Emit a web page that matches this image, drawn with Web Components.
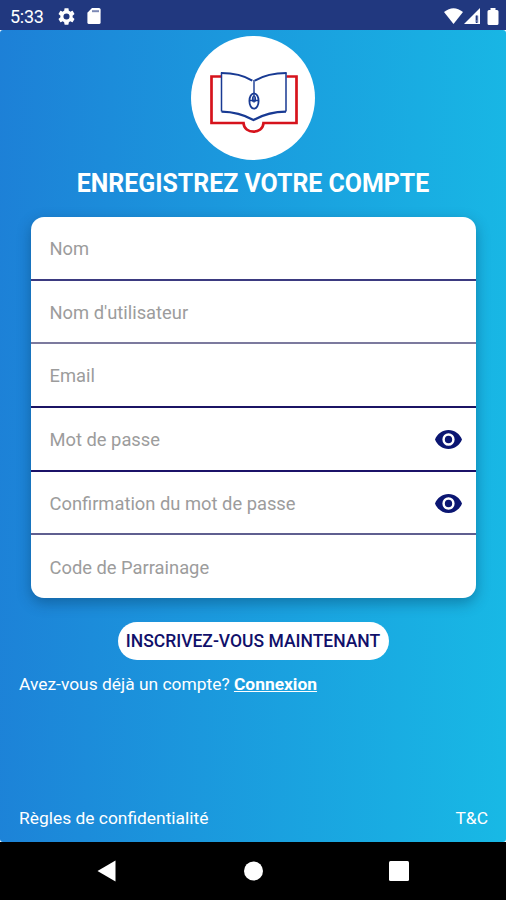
<!DOCTYPE html>
<html lang="fr">
<head>
<meta charset="utf-8">
<title>Enregistrez votre compte</title>
<style>
  html, body {
    margin: 0;
    height: 100%;
    background: #000;
    font-family: Roboto, "Liberation Sans", sans-serif;
  }
</style>
</head>
<body>
<register-screen></register-screen>

<script>
// Builds a custom element from its shadow markup
function define(name, html) {
  const template = document.createElement('template');
  template.innerHTML = html;
  customElements.define(name, class extends HTMLElement {
    constructor() {
      super();
      this.attachShadow({ mode: 'open' }).appendChild(template.content.cloneNode(true));
    }
  });
}

define('status-bar', `
  <style>
    :host {
      display: flex;
      align-items: center;
      height: 30px;
      box-sizing: border-box;
      padding: 2px 7px 0 10px;
      background: #21387f;
      color: #fff;
      font-size: 18px;
      letter-spacing: -0.3px;
    }
    svg { display: block; fill: #fff; }
    .gear { margin-left: 14px; }
    .card { margin-left: 12px; }
    .wifi { margin-left: auto; }
    .signal { margin-left: 1px; }
    .battery { margin-left: 7px; }
  </style>
  <span>5:33</span>
  <svg class="gear" width="17" height="17" viewBox="2 2 20 20"><path d="M19.14 12.94c.04-.3.06-.61.06-.94s-.02-.64-.07-.94l2.03-1.58c.18-.14.23-.41.12-.61l-1.92-3.32c-.12-.22-.37-.29-.59-.22l-2.39.96c-.5-.38-1.03-.7-1.62-.94l-.36-2.54c-.04-.24-.24-.41-.48-.41h-3.84c-.24 0-.43.17-.47.41l-.36 2.54c-.59.24-1.13.57-1.62.94l-2.39-.96c-.22-.08-.47 0-.59.22L2.74 8.87c-.12.21-.08.47.12.61l2.03 1.58c-.05.3-.09.63-.09.94s.02.64.07.94l-2.03 1.58c-.18.14-.23.41-.12.61l1.92 3.32c.12.22.37.29.59.22l2.39-.96c.5.38 1.03.7 1.62.94l.36 2.54c.05.24.24.41.48.41h3.84c.24 0 .44-.17.47-.41l.36-2.54c.59-.24 1.13-.56 1.62-.94l2.39.96c.22.08.47 0 .59-.22l1.92-3.32c.12-.22.07-.47-.12-.61zM12 15.6A3.6 3.6 0 1 1 12 8.4a3.6 3.6 0 0 1 0 7.2z"/></svg>
  <svg class="card" width="14" height="16" viewBox="0 0 14 16"><path d="M5 0h7a1.6 1.6 0 0 1 1.6 1.6v12.8A1.6 1.6 0 0 1 12 16H2a1.6 1.6 0 0 1-1.6-1.6V4.8z"/><path d="M5 2.2h7v2H5z" fill="#7c89b5"/></svg>
  <svg class="wifi" width="19" height="16" viewBox="0 0 19 16"><path d="M0 4Q9.500-3.600 19 4L9.500 16z"/></svg>
  <svg class="signal" width="16" height="16" viewBox="0 0 16 16"><path d="M0 16L16 0v16z"/><path d="M11.300 7.600h3v7h-3z" fill="#8d98c2"/><path d="M12 7.400h1.400v5H12zM12 13.600h1.400V15H12z" fill="#21387f"/></svg>
  <svg class="battery" width="12" height="17" viewBox="0 0 12 17"><path d="M3.500 0h5v2H10q1.500 0 1.500 1.500v12q0 1.500-1.500 1.500H2Q.500 17 .500 15.500v-12Q.500 2 2 2h1.500z"/></svg>
`);

define('app-logo', `
  <style>
    :host {
      display: block;
      width: 124px;
      height: 124px;
      border-radius: 50%;
      background: #fff;
    }
    svg { display: block; fill: none; }
  </style>
  <svg width="124" height="124" viewBox="191 36 124 124">
    <path d="M221.500 76.500H211.500V123H243.500C244 134.500 263 134.500 263.500 123H296.500V76.500H286.500" stroke="#d6131c" stroke-width="2.700"/>
    <path d="M221.500 72.500V111.500M286 111.500V72.500" stroke="#183a93" stroke-width="1.500"/>
    <path d="M221 73Q240 73 252.300 80.600M254.800 80.600Q268 73 286.500 73M221.500 111.700Q239 112 253.500 120Q268 112 286 111.700" stroke="#183a93" stroke-width="2.200"/>
    <path d="M254 80V101M249.500 100.500H258.500" stroke="#183a93" stroke-width="1.400"/>
    <ellipse cx="254" cy="101" rx="4.600" ry="7.700" stroke="#183a93" stroke-width="1.800"/>
    <ellipse cx="254" cy="99" rx="1.500" ry="3" stroke="#183a93" stroke-width="1.200"/>
  </svg>
`);

define('form-field', `
  <style>
    :host {
      display: flex;
      align-items: center;
      justify-content: space-between;
      box-sizing: border-box;
      height: 63.7px;
      padding: 1px 14px 0 19px;
      border-bottom: 2px solid var(--line, #2b2a78);
      color: #9c9c9c;
      font-size: 18.33px;
    }
    :host(:last-child) { border-bottom: 0; height: 62.5px; }
    svg { display: none; fill: #0b1672; }
    :host([password]) svg { display: block; }
  </style>
  <slot></slot>
  <svg width="27" height="19" viewBox="1 4.500 22 15" preserveAspectRatio="none"><path d="M12 4.500C7 4.500 2.730 7.610 1 12c1.730 4.390 6 7.500 11 7.500s9.270-3.110 11-7.500c-1.730-4.390-6-7.500-11-7.500zM12 17a5 5 0 1 1 0-10 5 5 0 0 1 0 10zm0-8a3 3 0 1 0 0 6 3 3 0 0 0 0-6z"/></svg>
`);

define('form-card', `
  <style>
    :host {
      display: block;
      overflow: hidden;
      border-radius: 13px;
      background: #fff;
      box-shadow: 0 5px 14px rgba(0, 40, 70, 0.36);
    }
  </style>
  <slot></slot>
`);

define('pill-button', `
  <style>
    button {
      display: block;
      width: 271px;
      height: 38px;
      padding: 1px 0 0;
      border: 0;
      border-radius: 19px;
      background: #fff;
      color: #10106a;
      font: 500 17.5px Roboto, "Liberation Sans", sans-serif;
      white-space: nowrap;
    }
  </style>
  <button type="button"><slot></slot></button>
`);

define('nav-bar', `
  <style>
    :host {
      display: grid;
      grid-template-columns: repeat(3, 146px);
      justify-content: center;
      justify-items: center;
      align-items: center;
      height: 58px;
      background: #000;
    }
    svg { display: block; fill: #fff; }
  </style>
  <svg width="20" height="22" viewBox="0 0 20 22"><path d="M.500 11L18.500 .500v21z"/></svg>
  <svg width="20" height="20" viewBox="0 0 20 20"><circle cx="10.500" cy="10" r="9.500"/></svg>
  <svg width="20" height="20" viewBox="0 0 20 20"><rect width="20" height="20" rx="1.500"/></svg>
`);

define('register-screen', `
  <style>
    :host {
      display: flex;
      flex-direction: column;
      width: 506px;
      height: 900px;
      overflow: hidden;
      background: #fff;
    }
    main {
      flex: 1;
      display: flex;
      flex-direction: column;
      align-items: center;
      box-sizing: border-box;
      padding-top: 6px;
      border-radius: 3px;
      background: linear-gradient(92deg, #1d80d7, #18b9e5);
      color: #fff;
    }
    h1 {
      margin: 8px 0 0;
      font-size: 24.9px;
      line-height: 32px;
      font-weight: 700;
      white-space: nowrap;
    }
    form-card { width: 445px; margin: 17px 0 24px; }
    .login, footer {
      align-self: stretch;
      padding: 0 18px 0 19px;
      font-size: 17.4px;
      line-height: 22px;
    }
    .login { margin-top: 13px; }
    .login a { font-weight: 700; text-decoration: underline; }
    footer {
      display: flex;
      justify-content: space-between;
      margin-top: auto;
      padding-bottom: 13px;
    }
  </style>
  <status-bar></status-bar>
  <main>
    <app-logo></app-logo>
    <h1>ENREGISTREZ VOTRE COMPTE</h1>
    <form-card>
      <form-field style="--line: #3b3a80">Nom</form-field>
      <form-field style="--line: #7c7a9e">Nom d'utilisateur</form-field>
      <form-field style="--line: #1b1464">Email</form-field>
      <form-field style="--line: #1b1268" password>Mot de passe</form-field>
      <form-field style="--line: #5f5f90" password>Confirmation du mot de passe</form-field>
      <form-field>Code de Parrainage</form-field>
    </form-card>
    <pill-button>INSCRIVEZ-VOUS MAINTENANT</pill-button>
    <div class="login">Avez-vous déjà un compte? <a>Connexion</a></div>
    <footer><span>Règles de confidentialité</span><span>T&amp;C</span></footer>
  </main>
  <nav-bar></nav-bar>
`);
</script>
</body>
</html>
